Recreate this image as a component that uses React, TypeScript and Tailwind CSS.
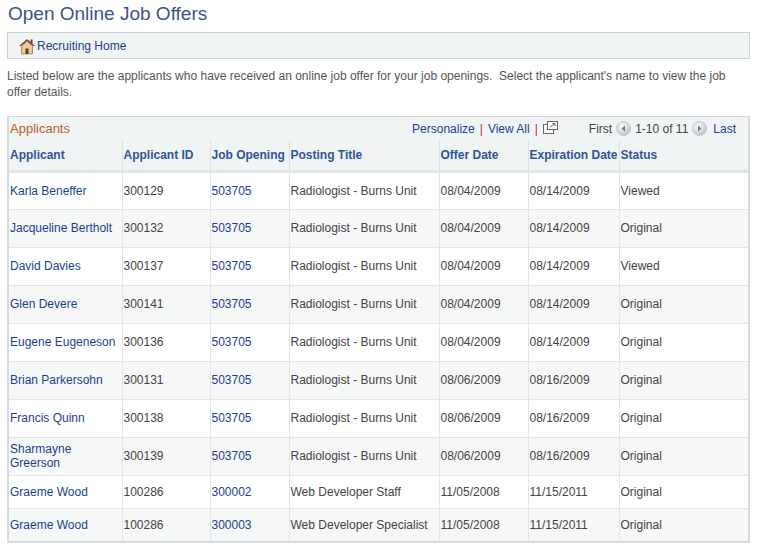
const rows = [
  ["Karla Beneffer", "300129", "503705", "Radiologist - Burns Unit", "08/04/2009", "08/14/2009", "Viewed"],
  ["Jacqueline Bertholt", "300132", "503705", "Radiologist - Burns Unit", "08/04/2009", "08/14/2009", "Original"],
  ["David Davies", "300137", "503705", "Radiologist - Burns Unit", "08/04/2009", "08/14/2009", "Viewed"],
  ["Glen Devere", "300141", "503705", "Radiologist - Burns Unit", "08/04/2009", "08/14/2009", "Original"],
  ["Eugene Eugeneson", "300136", "503705", "Radiologist - Burns Unit", "08/04/2009", "08/14/2009", "Original"],
  ["Brian Parkersohn", "300131", "503705", "Radiologist - Burns Unit", "08/06/2009", "08/16/2009", "Original"],
  ["Francis Quinn", "300138", "503705", "Radiologist - Burns Unit", "08/06/2009", "08/16/2009", "Original"],
  ["Sharmayne Greerson", "300139", "503705", "Radiologist - Burns Unit", "08/06/2009", "08/16/2009", "Original"],
  ["Graeme Wood", "100286", "300002", "Web Developer Staff", "11/05/2008", "11/15/2011", "Original"],
  ["Graeme Wood", "100286", "300003", "Web Developer Specialist", "11/05/2008", "11/15/2011", "Original"],
];

const headers = ["Applicant", "Applicant ID", "Job Opening", "Posting Title", "Offer Date", "Expiration Date", "Status"];
const widths = ["w-[113px]", "w-[88px]", "w-[79px]", "w-[150px]", "w-[89px]", "w-[90px]", "w-auto"];
const links = [true, false, true, false, false, false, false];

function Arrow({ dir }: { dir: "l" | "r" }) {
  return (
    <svg width="15" height="15" viewBox="0 0 15 15" className="inline-block">
      <defs>
        <radialGradient id={"g" + dir} cx="0.4" cy="0.35" r="0.7">
          <stop offset="0" stopColor="#ffffff" />
          <stop offset="1" stopColor="#b8bec6" />
        </radialGradient>
      </defs>
      <circle cx="7.5" cy="7.5" r="7" fill={"url(#g" + dir + ")"} stroke="#c4c9cf" />
      {dir === "l" ? <path d="M9 4.5 L5.5 7.5 L9 10.5Z" fill="#6d7a8a" /> : <path d="M6 4.5 L9.5 7.5 L6 10.5Z" fill="#6d7a8a" />}
    </svg>
  );
}

export default function App() {
  return (
    <div className="w-[765px] h-[555px] bg-white text-[12px] text-[#444] px-[7px] pt-[2px]" style={{ fontFamily: "'Liberation Sans', Arial, sans-serif" }}>
      <h1 className="text-[19px] text-[#3b5487] leading-[24px] pl-[1px]">Open Online Job Offers</h1>
      <div className="mt-[6px] w-[743px] h-[27px] bg-[#f1f4f5] border border-[#ccd0d4] flex items-center pl-[10px]">
        <svg width="18" height="18" viewBox="0 0 18 18">
          <path d="M1 9 L9 2 L17 9 L15 9 L9 4 L3 9Z" fill="#7a3b2a" />
          <path d="M3.5 9 L9 4.5 L14.5 9 V17 H3.5Z" fill="#e9c9a0" stroke="#8a5a3a" strokeWidth="0.6" />
          <rect x="7.5" y="11.5" width="3" height="5.5" fill="#6a3a22" />
          <rect x="12.5" y="2.5" width="2" height="4" fill="#7a3b2a" />
        </svg>
        <span className="text-[#1a3f8f] ml-[1px]">Recruiting Home</span>
      </div>
      <p className="mt-[9px] leading-[16px] text-[#555] w-[745px]">
        Listed below are the applicants who have received an online job offer for your job openings.&nbsp; Select the applicant's name to view the job offer details.
      </p>
      <div className="mt-[16px] w-[743px] border-2 border-[#d7dadd] border-t border-r-[2px]">
        <div className="h-[23px] bg-[#f1f4f5] flex items-center justify-between pl-[1px] pr-[12px]">
          <span className="text-[13px] text-[#b8612b]">Applicants</span>
          <div className="flex items-center text-[#1a3f8f]">
            <span>Personalize</span>
            <span className="text-[#c03030] mx-[5px]">|</span>
            <span>View All</span>
            <span className="text-[#c03030] mx-[5px]">|</span>
            <svg width="15" height="13" viewBox="0 0 15 13" className="mb-[3px]">
              <rect x="0.5" y="3.5" width="10" height="9" fill="white" stroke="#666" />
              <rect x="4.5" y="0.5" width="10" height="8" fill="white" stroke="#666" />
              <path d="M7 6 L12 2.5 M9.5 2.5 H12 V5" stroke="#666" fill="none" />
            </svg>
            <span className="text-[#444] ml-[31px] mr-[4px]">First</span>
            <Arrow dir="l" />
            <span className="text-[#444] mx-[4px]">1-10 of 11</span>
            <Arrow dir="r" />
            <span className="ml-[6px]">Last</span>
          </div>
        </div>
        <table className="w-full border-collapse">
          <thead>
            <tr className="h-[31px] bg-[#f1f4f5] border-b-[3px] border-[#e3e6e8]">
              {headers.map((h, i) => (
                <th key={h} className={`${widths[i]} whitespace-nowrap text-left font-bold text-[#2f5597] px-[1px] border-l border-[#dfe2e4] first:border-l-0 align-middle`}>
                  {h}
                </th>
              ))}
            </tr>
          </thead>
          <tbody>
            {rows.map((r, ri) => (
              <tr key={ri} className={`${ri >= 8 ? "h-[33px]" : "h-[38px]"} ${ri % 2 ? "bg-[#f6f7f7]" : "bg-white"} border-t border-[#e3e6e8]`}>
                {r.map((c, ci) => (
                  <td key={ci} className={`px-[1px] leading-[14px] border-l border-[#e3e6e8] first:border-l-0 ${ci === 0 || links[ci] ? "text-[#1a3f8f]" : "text-[#444]"}`}>
                    {ci === 0 && c === "Sharmayne Greerson" ? <>Sharmayne<br />Greerson</> : c}
                  </td>
                ))}
              </tr>
            ))}
          </tbody>
        </table>
      </div>
    </div>
  );
}
